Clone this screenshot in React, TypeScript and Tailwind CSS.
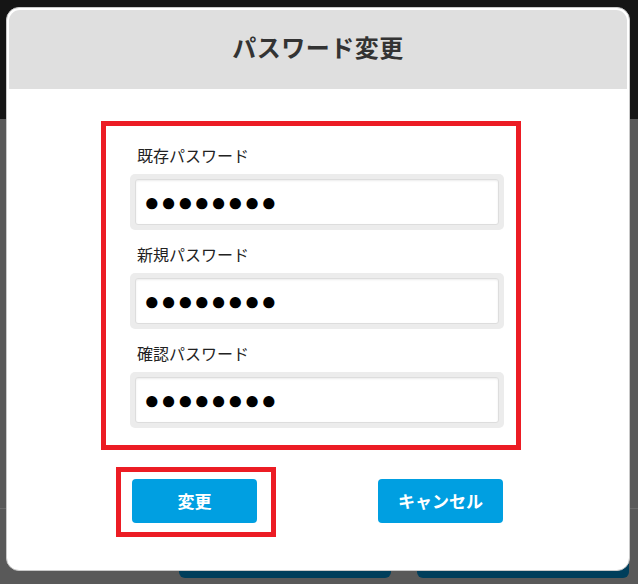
import React from 'react';

const fields = ['既存パスワード', '新規パスワード', '確認パスワード'];

const PasswordField = ({ label, first }: { label: string; first?: boolean }) => {
    return (
        <div className={first ? '' : 'mt-[12px]'}>
            <label className="block pl-[7px] text-[16px] leading-[24px] text-[#222]">{label}</label>
            <div className="mt-[7px] h-[56px] rounded-[5px] bg-[#ececec] p-[5px]">
                <div className="flex h-full items-center rounded-[3px] border border-[#dddddd] bg-white pl-[8px] shadow-[inset_0_1px_2px_rgba(0,0,0,0.08)]">
                    <span className="font-['Liberation_Sans',sans-serif] text-[26px] leading-none tracking-[1px] text-black">●●●●●●●●</span>
                </div>
            </div>
        </div>
    );
};

const App = () => {
    return (
        <div className="relative h-[584px] w-[638px] overflow-hidden bg-[#595959] font-['Noto_Sans_CJK_JP',sans-serif]">
            {/* page behind the dialog */}
            <div className="h-[119px] bg-[#151515]" />
            <div className="h-[389px]" />
            <div className="h-px bg-[#6b6b6b]" />
            <div className="mt-[25px] flex">
                <div className="ml-[179px] h-[44px] w-[212px] rounded-b-[6px] bg-[#003e5b]" />
                <div className="ml-[26px] h-[44px] w-[212px] rounded-b-[6px] bg-[#003e5b]" />
            </div>

            {/* dialog */}
            <div className="absolute left-[6px] top-[7px] h-[564px] w-[624px] rounded-[13px] border border-[#c9c9c9] bg-white p-[2px]">
                <div className="flex h-[79px] items-center justify-center rounded-t-[11px] bg-[#dfdfdf] pb-[6px]">
                    <h1 className="text-[24px] font-bold tracking-[0.5px] text-[#333]">パスワード変更</h1>
                </div>

                <form>
                    <div className="ml-[92px] mt-[32px] w-[420px] border-[5px] border-[#ec1c24] pb-[17px] pl-[24px] pr-[12px] pt-[17px]">
                        {fields.map((f, i) => (
                            <PasswordField key={f} label={f} first={i === 0} />
                        ))}
                    </div>

                    <div className="mt-[17px] flex items-start">
                        <div className="ml-[107px] border-[5px] border-[#ec1c24] pb-[9px] pl-[11px] pr-[14px] pt-[7px]">
                            <button type="button" className="h-[44px] w-[125px] rounded-[4px] bg-[#009fe1] text-[17px] font-bold text-white">
                                変更
                            </button>
                        </div>
                        <button type="button" className="ml-[102px] mt-[12px] h-[44px] w-[125px] rounded-[4px] bg-[#009fe1] text-[17px] font-bold text-white">
                            キャンセル
                        </button>
                    </div>
                </form>
            </div>
        </div>
    );
};

export default App;
